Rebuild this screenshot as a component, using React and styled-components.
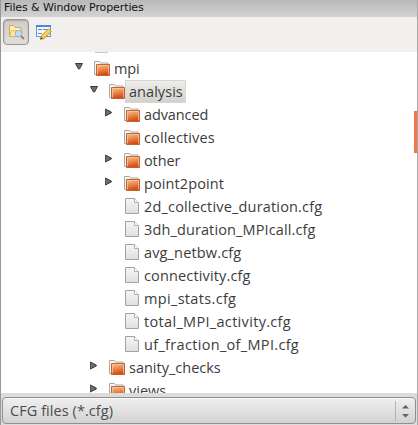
import React from 'react';
import styled, { createGlobalStyle } from 'styled-components';

const GlobalStyle = createGlobalStyle`
  * { box-sizing: border-box; }
  body { margin: 0; overflow: hidden; background: #fff; }
`;

const Panel = styled.div`
  position: relative;
  display: flex;
  flex-direction: column;
  width: 418px;
  height: 425px;
  overflow: hidden;
  border-left: 1px solid #9b9893;
  border-right: 1px solid #aaa;
  background: #fff;
  color: #3c3c3c;
  font-family: "Open Sans", "Noto Sans", sans-serif;
`;

const TitleBar = styled.header`
  flex: none;
  height: 17px;
  padding-left: 3px;
  background: linear-gradient(#b9b9b9, #d3d3d3);
  color: #111;
  font: 11px/15px "DejaVu Sans", sans-serif;
  letter-spacing: ${p => p.$spacing}px;
  white-space: nowrap;
`;

const Toolbar = styled.div`
  flex: none;
  display: flex;
  gap: 2px;
  height: 35px;
  padding: 2px 2px 0;
  background: #f1f0ee;
`;

const ToolButton = styled.button`
  display: flex;
  align-items: center;
  justify-content: center;
  width: 26px;
  height: 26px;
  padding: 0;
  border: 1px solid ${p => (p.$active ? '#969592' : 'transparent')};
  border-radius: 4px;
  background: ${p => (p.$active ? 'linear-gradient(#cfcecc, #dededc)' : 'none')};
  box-shadow: ${p => (p.$active ? 'inset 0 1px 2px #aaa8a5' : 'none')};
`;

const Tree = styled.div`
  flex: none;
  height: 341px;
  overflow: hidden;
`;

const ClippedRow = styled.div`
  display: flex;
  height: 5px;
  padding-left: 94px;
`;

const ClippedEdge = styled.span`
  width: 13px;
  height: 1px;
  background: #c9c9c7;
`;

const Row = styled.div`
  display: flex;
  height: 23px;
  padding-left: ${p => 74 + p.$depth * 15}px;
`;

const IconSlot = styled.span`
  flex: none;
  width: ${p => p.$width}px;
  height: 23px;
  svg { display: block; }
`;

const Label = styled.span`
  display: block;
  height: 23px;
  margin-left: -1px;
  padding: 0 3px 0 4px;
  background: ${p => (p.$selected ? 'linear-gradient(#f0efed, #d2d0cc)' : 'none')};
  box-shadow: ${p => (p.$selected ? 'inset 0 0 0 1px #d8d6d2' : 'none')};
  font-size: 14.5px;
  line-height: 23px;
  letter-spacing: ${p => p.$spacing}px;
  white-space: nowrap;
`;

const Footer = styled.footer`
  flex: none;
  height: 32px;
  padding: 4px 1px 0;
  background: #dcdcdc;
`;

const Combo = styled.div`
  display: flex;
  align-items: center;
  height: 27px;
  padding-left: 7px;
  border: 1px solid #8f8f8f;
  border-radius: 4px;
  background: linear-gradient(#f0f0f0, #d2d2d2);
  box-shadow: inset 0 1px #f8f8f8;
  color: #4c4c4c;
  font-size: 14.5px;
  letter-spacing: ${p => p.$spacing}px;
`;

const Stepper = styled.span`
  display: flex;
  align-items: center;
  justify-content: center;
  width: 20px;
  height: 20px;
  margin-left: auto;
  border-left: 1px solid #b5b5b5;
`;

const ScrollMark = styled.i`
  position: absolute;
  top: 111px;
  right: 0;
  width: 3px;
  height: 42px;
  background: #f07746;
`;

const Arrow = ({ open }) => (
  <svg width="18" height="23" viewBox="0 0 18 23">
    <path d={open ? 'M.5 6.5h7l-3 5.5h-1z' : 'M.8 6.5l6 3v1l-6 3z'} transform={open ? undefined : 'translate(-.5 -.5)'} fill="#6d6d6d" stroke="#3b3b3b" strokeWidth="1" />
  </svg>
);

const Folder = () => (
  <svg width="18" height="23" viewBox="0 0 18 23">
    <defs>
      <linearGradient id="folder" x1="0" y1="0" x2=".25" y2="1">
        <stop offset="0" stopColor="#f6c497" />
        <stop offset=".5" stopColor="#ea8c50" />
        <stop offset="1" stopColor="#d54a14" />
      </linearGradient>
    </defs>
    <path d="M3 17.500H1.500v-13h5l1 1.500h7.500v2" fill="#f7f7f6" stroke="#a9a9a7" />
    <path d="M3.500 7.500h13v11h-13z" fill="url(#folder)" stroke="#c9602f" />
    <path d="M4.500 17.500v-9h11v9" fill="none" stroke="#f8cfaa" strokeOpacity=".65" />
  </svg>
);

const File = () => (
  <svg width="18" height="23" viewBox="0 0 18 23">
    <defs>
      <linearGradient id="file" x1="0" y1="0" x2="0" y2="1">
        <stop offset="0" stopColor="#f6f6f6" />
        <stop offset="1" stopColor="#dfdfdf" />
      </linearGradient>
    </defs>
    <path d="M2.500 3.500h9l4 4v11h-13z" fill="url(#file)" stroke="#a2a2a0" />
    <path d="M11.500 3.500v4h4" fill="#fff" stroke="#b0b0ae" />
  </svg>
);

const BrowseIcon = () => (
  <svg width="18" height="18" viewBox="0 0 18 18">
    <path d="M2.500 13.500v-11h4l1.500 2h6v9z" fill="#fff0b8" stroke="#dfa840" />
    <path d="M2.500 13.500l2-6h10.500l-1 6z" fill="#fbe59c" stroke="#e4b34b" strokeWidth=".8" />
    <path d="M13.500 12.500l3.500 3.500" stroke="#a97c5c" strokeWidth="1.800" />
    <circle cx="11.500" cy="10.500" r="3.300" fill="#bddcf6" stroke="#8fb4dc" />
  </svg>
);

const EditIcon = () => (
  <svg width="18" height="18" viewBox="0 0 18 18">
    <rect x="1.500" y="2.500" width="14" height="11" fill="#f2f7ff" stroke="#6796d8" />
    <path d="M1 3h15" stroke="#4f86d2" strokeWidth="2" />
    <path d="M3 6.500h4m1 0h5m-10 4h4" stroke="#6e8cb3" />
    <path d="M5.500 16l1-3.500 7-6.500 3 2.500-7.500 7z" fill="#f6c64c" stroke="#cc9638" />
    <path d="M8 13l6.500-6" stroke="#ffe592" />
    <path d="M5 16.500l1-2.500 2 2z" fill="#595350" />
  </svg>
);

const Chevrons = () => (
  <svg width="9" height="14" viewBox="0 0 9 14">
    <path d="M1 4.500l3.500-3.500 3.500 3.500zM1 10h7l-3.500 3.500z" fill="#606060" />
  </svg>
);

const entries = [
  { name: 'mpi', depth: 0, kind: 'folder', open: true, spacing: -0.2 },
  { name: 'analysis', depth: 1, kind: 'folder', open: true, selected: true, spacing: 0.05 },
  { name: 'advanced', depth: 2, kind: 'folder', open: false, spacing: -0.1 },
  { name: 'collectives', depth: 2, kind: 'folder', spacing: 0.15 },
  { name: 'other', depth: 2, kind: 'folder', open: false, spacing: -0.1 },
  { name: 'point2point', depth: 2, kind: 'folder', open: false, spacing: 0.1 },
  { name: '2d_collective_duration.cfg', depth: 2, kind: 'file', spacing: 0.17 },
  { name: '3dh_duration_MPIcall.cfg', depth: 2, kind: 'file', spacing: 0.12 },
  { name: 'avg_netbw.cfg', depth: 2, kind: 'file', spacing: 0.15 },
  { name: 'connectivity.cfg', depth: 2, kind: 'file', spacing: 0.15 },
  { name: 'mpi_stats.cfg', depth: 2, kind: 'file', spacing: 0.33 },
  { name: 'total_MPI_activity.cfg', depth: 2, kind: 'file', spacing: 0.32 },
  { name: 'uf_fraction_of_MPI.cfg', depth: 2, kind: 'file', spacing: 0.32 },
  { name: 'sanity_checks', depth: 1, kind: 'folder', open: false, spacing: 0 },
  { name: 'views', depth: 1, kind: 'folder', open: false, spacing: 0 },
];

export default function App() {
  return (
    <>
      <GlobalStyle />
      <Panel>
        <TitleBar $spacing={-0.1}>Files &amp; Window Properties</TitleBar>
        <Toolbar>
          <ToolButton $active aria-label="Browse files"><BrowseIcon /></ToolButton>
          <ToolButton aria-label="Edit properties"><EditIcon /></ToolButton>
        </Toolbar>
        <Tree>
          <ClippedRow><ClippedEdge /></ClippedRow>
          {entries.map(e => (
            <Row key={e.name} $depth={e.depth}>
              <IconSlot $width={18}>{e.open !== undefined && <Arrow open={e.open} />}</IconSlot>
              <IconSlot $width={18}>{e.kind === 'folder' ? <Folder /> : <File />}</IconSlot>
              <Label $selected={e.selected} $spacing={e.spacing || 0}>{e.name}</Label>
            </Row>
          ))}
        </Tree>
        <Footer>
          <Combo $spacing={0.06}>
            CFG files (*.cfg)
            <Stepper><Chevrons /></Stepper>
          </Combo>
        </Footer>
        <ScrollMark />
      </Panel>
    </>
  );
}
